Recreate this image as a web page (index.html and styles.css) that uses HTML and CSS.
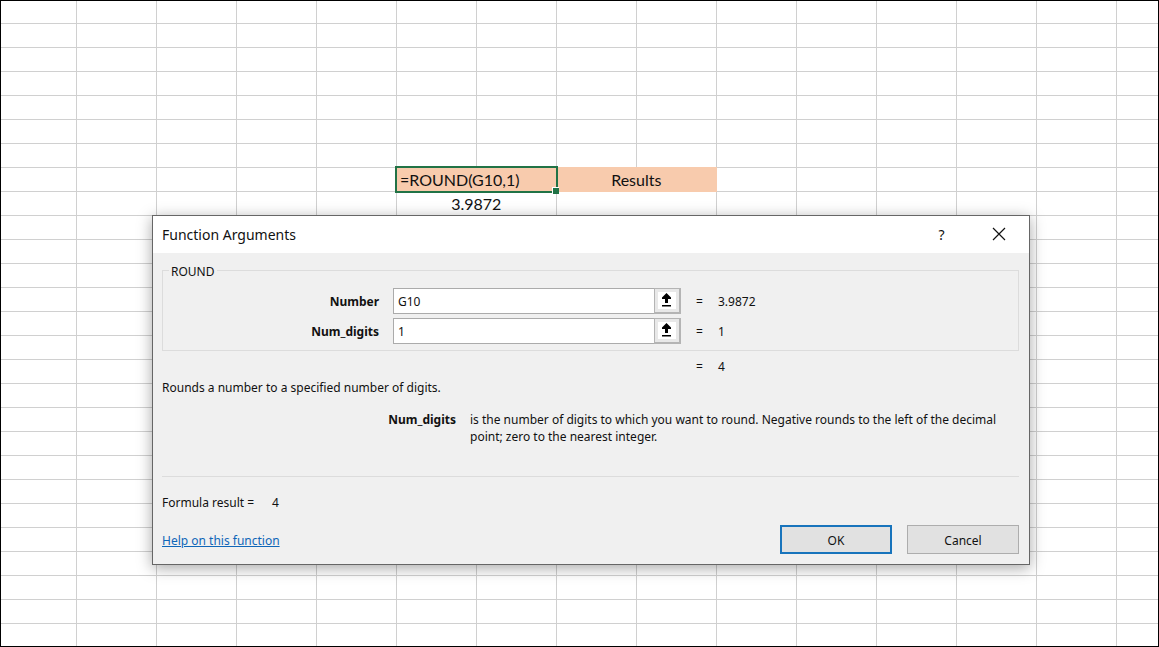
FILE: index.html
```html
<!DOCTYPE html>
<html lang="en">
<head>
  <meta charset="UTF-8">
  <title>ROUND function</title>
  <link rel="stylesheet" href="styles.css">
</head>
<body>
<div class="sheet">
  <table class="cells">
    <tr class="filled">
      <td class="selected">=ROUND(G10,1)</td>
      <td>Results</td>
    </tr>
    <tr>
      <td>3.9872</td>
      <td></td>
    </tr>
  </table>

  <div class="dialog" role="dialog" aria-labelledby="dialog-title">
    <div class="title-bar">
      <span id="dialog-title">Function Arguments</span>
      <div class="window-buttons">
        <button class="window-btn" type="button">?</button>
        <button class="window-btn" type="button" aria-label="Close">
          <svg width="14" height="14" viewBox="0 0 14 14"><path d="M1 1L13 13M13 1L1 13" stroke="#111" stroke-width="1.2" fill="none"/></svg>
        </button>
      </div>
    </div>

    <form class="dialog-body">
      <fieldset class="arguments">
        <legend>ROUND</legend>
        <div class="arg-row">
          <label for="number">Number</label>
          <div class="ref-box">
            <input id="number" type="text" value="G10">
            <button class="ref-btn" type="button" aria-label="Collapse dialog">
              <svg width="11" height="14" viewBox="0 0 11 14"><path d="M5.5 0L10 4.5V6H7V10H4V6H1V4.5ZM1 12H10V13.5H1Z" fill="#000"/></svg>
            </button>
          </div>
          <span>=</span>
          <output for="number">3.9872</output>
        </div>
        <div class="arg-row">
          <label for="num-digits">Num_digits</label>
          <div class="ref-box">
            <input id="num-digits" type="text" value="1">
            <button class="ref-btn" type="button" aria-label="Collapse dialog">
              <svg width="11" height="14" viewBox="0 0 11 14"><path d="M5.5 0L10 4.5V6H7V10H4V6H1V4.5ZM1 12H10V13.5H1Z" fill="#000"/></svg>
            </button>
          </div>
          <span>=</span>
          <output for="num-digits">1</output>
        </div>
      </fieldset>

      <div class="arg-row total">
        <span></span>
        <span></span>
        <span>=</span>
        <output>4</output>
      </div>

      <p class="description">Rounds a number to a specified number of digits.</p>
      <div class="arg-help">
        <strong>Num_digits</strong>
        <p>is the number of digits to which you want to round. Negative rounds to the left of the decimal point; zero to the nearest integer.</p>
      </div>

      <div class="result">
        <span>Formula result =</span>
        <output>4</output>
      </div>

      <div class="dialog-footer">
        <a href="#">Help on this function</a>
        <div class="actions">
          <button class="btn default" type="button">OK</button>
          <button class="btn" type="button">Cancel</button>
        </div>
      </div>
    </form>
  </div>
</div>
</body>
</html>
```
FILE: styles.css
```css
* {
  box-sizing: border-box;
}
body {
  margin: 0;
  font-family: "Noto Sans", "Open Sans", sans-serif;
  font-size: 12px;
  line-height: 17px;
  color: #111;
}
p {
  margin: 0;
}
button, input {
  font: inherit;
  color: inherit;
}
.sheet {
  position: relative;
  min-height: 100vh;
  padding: 166px 0 0 395px;
  border: 1px solid #000;
  background-color: #fff;
  background-image:
    linear-gradient(to right, #d0d0d0 1px, transparent 1px),
    linear-gradient(to bottom, #d0d0d0 1px, transparent 1px);
  background-size: 80px 24px;
  background-position: 75px 22px;
}

/* worksheet cells */
.cells {
  width: 321px;
  table-layout: fixed;
  border-spacing: 0;
  background: #fff;
  font-family: Lato, sans-serif;
  font-size: 16px;
  text-align: center;
}
.cells td {
  height: 24px;
  padding: 0 0 1px;
  border-right: 1px solid #d0d0d0;
}
.cells td:first-child {
  border-left: 1px solid #d0d0d0;
}
.cells .filled td {
  height: 25px;
  padding-top: 1px;
  background: #f8cbad;
  border-color: #f8cbad;
}
.cells .filled .selected {
  position: relative;
  padding-left: 3px;
  text-align: left;
}
.selected::before {
  content: "";
  position: absolute;
  inset: -1px -2px -1px -2px;
  border: 2px solid #217346;
}
.selected::after {
  content: "";
  position: absolute;
  right: -3px;
  bottom: -2px;
  width: 6px;
  height: 6px;
  border: 1px solid #fff;
  border-width: 1px 0 0 1px;
  background: #217346;
}

/* dialog window */
.dialog {
  position: absolute;
  top: 214px;
  left: 151px;
  right: 128px;
  border: 1px solid #666;
  background: #f0f0f0;
  box-shadow: 0 3px 14px rgba(0,0,0,0.35);
}
.title-bar {
  display: flex;
  align-items: center;
  justify-content: space-between;
  height: 37px;
  padding: 0 9px;
  background: #fff;
  font-size: 14px;
}
.window-buttons {
  display: flex;
}
.window-btn {
  display: flex;
  align-items: center;
  justify-content: center;
  width: 57px;
  height: 36px;
  padding: 0 0 1px;
  border: none;
  background: none;
}
.window-btn:last-child {
  margin-right: -7px;
}
.dialog-body {
  padding: 9px 10px 10px 9px;
}
.arguments {
  margin: 0;
  padding: 9px 0 6px;
  border: 1px solid #dcdcdc;
}
.arguments legend {
  margin-left: 6px;
  padding: 3px 2px 0;
  line-height: 14px;
}
.arg-row {
  display: grid;
  grid-template-columns: 216px 289px 8px 1fr;
  column-gap: 14px;
  align-items: center;
}
.arg-row + .arg-row {
  margin-top: 4px;
}
.arg-row label {
  font-weight: bold;
  text-align: right;
}
.ref-box {
  display: flex;
  width: 288px;
  height: 26px;
}
.ref-box input {
  flex: 1;
  min-width: 0;
  padding: 0 4px;
  border: 1px solid #ababab;
  border-right: none;
  background: #fff;
}
.ref-btn {
  display: flex;
  align-items: center;
  justify-content: center;
  width: 27px;
  padding: 0 1px 1px 0;
  border: 2px solid #b4b4b4;
  border-width: 1px 2px 2px 1px;
  background: #fff;
  box-shadow: inset 0 0 0 3px #e8e8e8;
}
.total {
  margin: 7px 1px 4px;
}
.arg-help {
  display: grid;
  grid-template-columns: 294px 1fr;
  column-gap: 14px;
  margin-top: 15px;
  padding-bottom: 31px;
  border-bottom: 1px solid #dcdcdc;
}
.arg-help strong {
  text-align: right;
}
.result {
  display: flex;
  gap: 18px;
  margin: 17px 0 14px;
}
.dialog-footer {
  display: flex;
  align-items: center;
  justify-content: space-between;
}
.dialog-footer a {
  padding-top: 2px;
  color: #0f66b8;
}
.actions {
  display: flex;
  gap: 15px;
}
.btn {
  width: 112px;
  height: 29px;
  padding: 2px 0 0;
  border: 1px solid #adadad;
  background: #e1e1e1;
}
.btn.default {
  border: 2px solid #1874bc;
}
```
